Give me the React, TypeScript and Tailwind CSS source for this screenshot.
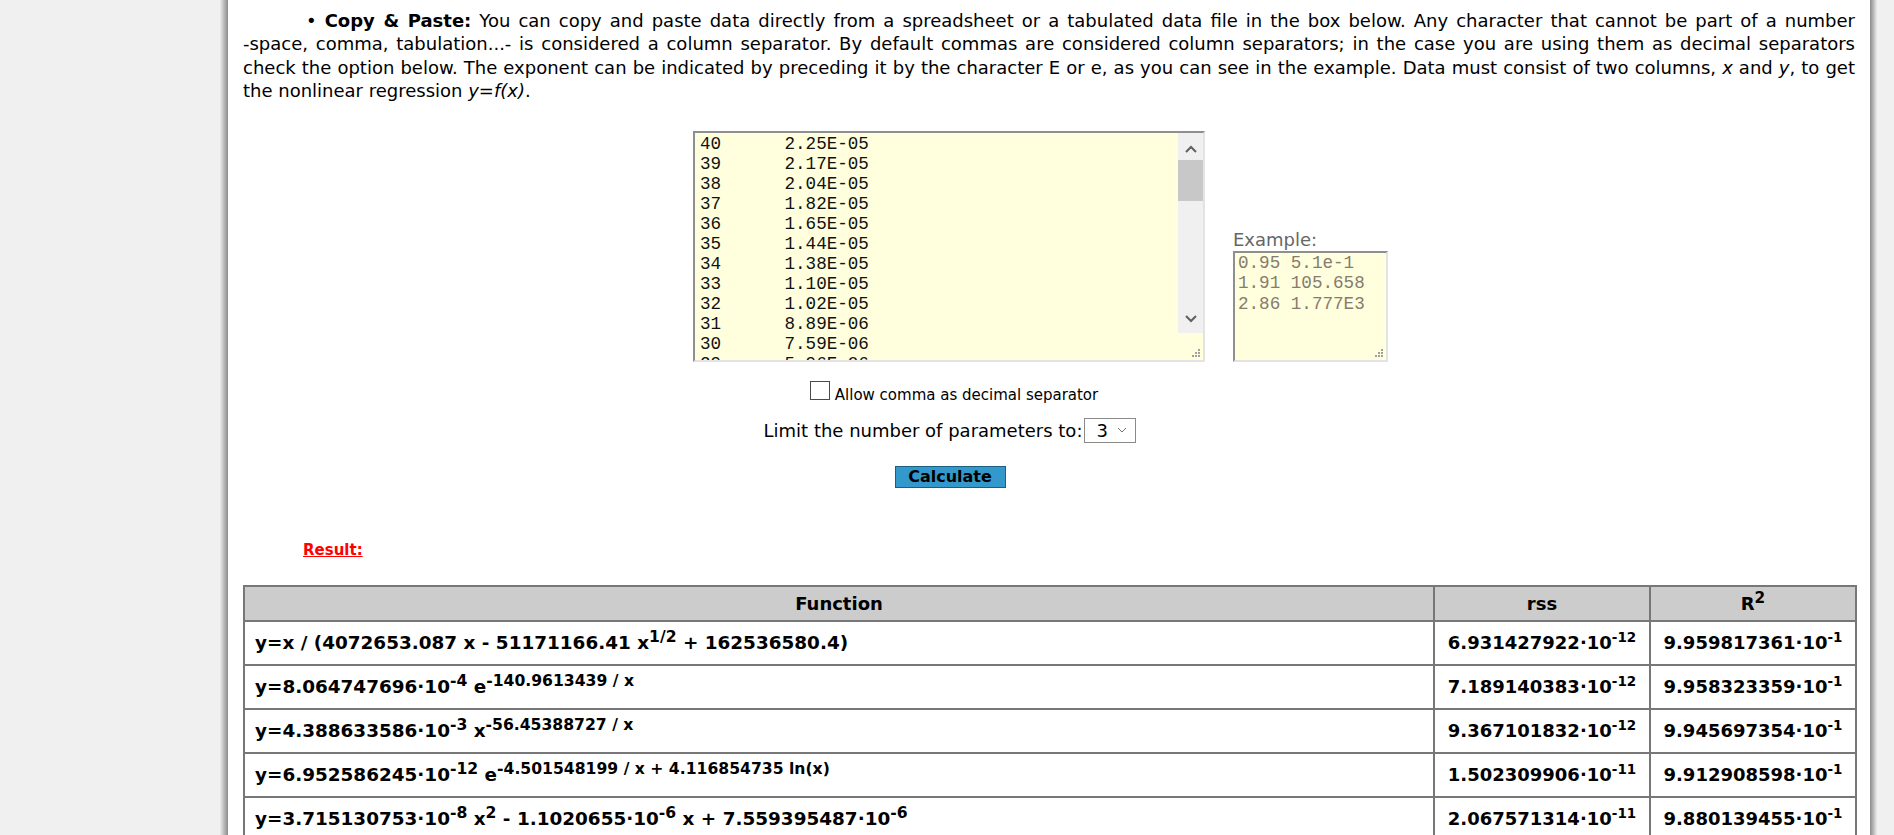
import React from "react";

const dataRows: [string, string][] = [
  ["40", "2.25E-05"],
  ["39", "2.17E-05"],
  ["38", "2.04E-05"],
  ["37", "1.82E-05"],
  ["36", "1.65E-05"],
  ["35", "1.44E-05"],
  ["34", "1.38E-05"],
  ["33", "1.10E-05"],
  ["32", "1.02E-05"],
  ["31", "8.89E-06"],
  ["30", "7.59E-06"],
  ["29", "5.96E-06"],
  ["28", "5.06E-06"],
];

function Dots() {
  return (
    <svg width="9" height="9" viewBox="0 0 9 9" className="block">
      <rect x="7" y="1" width="2" height="2" fill="#a0a0a0" />
      <rect x="4" y="4" width="2" height="2" fill="#a0a0a0" />
      <rect x="7" y="4" width="2" height="2" fill="#a0a0a0" />
      <rect x="1" y="7" width="2" height="2" fill="#a0a0a0" />
      <rect x="4" y="7" width="2" height="2" fill="#a0a0a0" />
      <rect x="7" y="7" width="2" height="2" fill="#a0a0a0" />
    </svg>
  );
}

function Chevron({ up }: { up?: boolean }) {
  return (
    <svg width="12" height="8" viewBox="0 0 12 8" className="block">
      <polyline
        points={up ? "1,7 6,2 11,7" : "1,1 6,6 11,1"}
        fill="none"
        stroke="#606060"
        strokeWidth="2"
      />
    </svg>
  );
}

function DataBox() {
  return (
    <div className="flex h-[231px] w-[512px] shrink-0 overflow-hidden border-2 border-t-[#8f8f8f] border-l-[#8f8f8f] border-r-[#e3e3e3] border-b-[#e3e3e3] bg-[#ffffdd]">
      <div className="flex-1 overflow-hidden pl-[5px] pt-[1px] font-['Liberation_Mono',monospace] text-[17.6px] leading-[20px] text-[#111] whitespace-pre [tab-size:8]">
        {dataRows.map(([a, b]) => (
          <div key={a}>{a + "\t" + b}</div>
        ))}
      </div>
      <div className="flex w-[25px] shrink-0 flex-col">
        <div className="flex h-[200px] flex-col bg-[#f0f0f0]">
          <div className="flex h-[27px] items-center justify-center pt-[5px]">
            <Chevron up />
          </div>
          <div className="h-[41px] bg-[#c8c8c8]" />
          <div className="flex-1" />
          <div className="flex h-[26px] items-center justify-center pb-[1px]">
            <Chevron />
          </div>
        </div>
        <div className="flex flex-1 items-end justify-end pb-[3px] pr-[3px]">
          <Dots />
        </div>
      </div>
    </div>
  );
}

function ExampleBox() {
  return (
    <div className="flex flex-col">
      <div className="text-[18px] leading-[22px] text-[#666]">Example:</div>
      <div className="relative h-[111px] w-[155px] border-2 border-t-[#8f8f8f] border-l-[#8f8f8f] border-r-[#e3e3e3] border-b-[#e3e3e3] bg-[#ffffdd] pl-[3px] font-['Liberation_Mono',monospace] text-[17.6px] leading-[20.5px] text-[#857b6f] whitespace-pre">
        <div>0.95 5.1e-1</div>
        <div>1.91 105.658</div>
        <div>2.86 1.777E3</div>
        <div className="absolute bottom-[3px] right-[3px]">
          <Dots />
        </div>
      </div>
    </div>
  );
}

const dot = "\u00b7";

function Sup({ children }: { children: React.ReactNode }) {
  return <sup className="top-[-0.42em] text-[0.85em]">{children}</sup>;
}

const td = "border-2 border-[#777] text-center";
const tdf = "border-2 border-[#777] px-[10px] text-left text-[18.4px]";

export default function App() {
  return (
    <div className="flex h-[835px] w-full overflow-hidden bg-[#f0f0f0] font-['DejaVu_Sans',sans-serif] text-black">
      <div className="w-[220px] shrink-0 bg-[#f0f0f0]" />
      <div className="w-[8px] shrink-0 bg-linear-to-r from-[#ececec] to-[#8c8c8c]" />
      <main className="w-[1642px] shrink-0 bg-white px-[15px] pt-[9px]">
        <div className="text-[18px] leading-[23.4px]">
          <div className="indent-[63px] text-justify [text-align-last:justify]">
            • <b>Copy &amp; Paste:</b> You can copy and paste data directly from a spreadsheet or
            a tabulated data file in the box below. Any character that cannot be part of a number
          </div>
          <div className="text-justify [text-align-last:justify]">
            -space, comma, tabulation...- is considered a column separator. By default commas are
            considered column separators; in the case you are using them as decimal separators
          </div>
          <div className="text-justify [text-align-last:justify]">
            check the option below. The exponent can be indicated by preceding it by the character
            E or e, as you can see in the example. Data must consist of two columns, <i>x</i> and{" "}
            <i>y</i>, to get
          </div>
          <div>
            the nonlinear regression <i>y=f(x)</i>.
          </div>
        </div>

        <div className="mt-[28px] flex flex-col items-center">
          <div className="flex items-end pr-[17px]">
            <DataBox />
            <div className="ml-[28px]">
              <ExampleBox />
            </div>
          </div>
          <div className="w-[714px] pl-[2px]">
            <div className="flex w-[512px] flex-col items-center">
              <div className="mt-[16px] flex items-start pl-[8px]">
                <div className="mt-[3px] h-[19px] w-[20px] shrink-0 border border-[#4a4a4a] bg-white" />
                <div className="ml-[5px] mt-[6px] text-[15px] leading-[22px]">
                  Allow comma as decimal separator
                </div>
              </div>
              <div className="mt-[12px] flex h-[25px] items-center">
                <span className="text-[18px] leading-[25px]">Limit the number of parameters to:</span>
                <div className="ml-[2px] flex h-[25px] w-[52px] items-center justify-between border border-[#8a8a8a] bg-white pl-[11px] pr-[8px]">
                  <span className="text-[18px] leading-[23px]">3</span>
                  <svg width="10" height="6" viewBox="0 0 10 6" className="block">
                    <polyline points="1,1 5,5 9,1" fill="none" stroke="#707070" strokeWidth="1" />
                  </svg>
                </div>
              </div>
              <button className="mt-[23px] flex h-[22px] w-[111px] items-center justify-center border border-[#1d5f80] bg-[#3399cc] text-[16px] font-bold leading-[20px] text-black">
                Calculate
              </button>
            </div>
          </div>
        </div>

        <div className="mt-[53px] pl-[60px] text-[15px] font-bold leading-[18px]">
          <a className="text-[#ff0000] underline">Result:</a>
        </div>

        <table className="mt-[26px] w-[1612px] table-fixed border-collapse text-[18px] font-bold">
          <colgroup>
            <col className="w-[1190px]" />
            <col className="w-[216px]" />
            <col className="w-[206px]" />
          </colgroup>
          <thead>
            <tr className="h-[35px] bg-[#cccccc]">
              <th className="border-2 border-[#777] py-0 text-center">Function</th>
              <th className="border-2 border-[#777] py-0 text-center">rss</th>
              <th className="border-2 border-[#777] py-0 text-center">
                R<Sup>2</Sup>
              </th>
            </tr>
          </thead>
          <tbody>
            <tr className="h-[44px]">
              <td className={tdf}>
                y=x / (4072653.087 x - 51171166.41 x<Sup>1/2</Sup> + 162536580.4)
              </td>
              <td className={td}>
                6.931427922{dot}10<sup>-12</sup>
              </td>
              <td className={td}>
                9.959817361{dot}10<sup>-1</sup>
              </td>
            </tr>
            <tr className="h-[44px]">
              <td className={tdf}>
                y=8.064747696{dot}10<Sup>-4</Sup> e<Sup>-140.9613439 / x</Sup>
              </td>
              <td className={td}>
                7.189140383{dot}10<sup>-12</sup>
              </td>
              <td className={td}>
                9.958323359{dot}10<sup>-1</sup>
              </td>
            </tr>
            <tr className="h-[44px]">
              <td className={tdf}>
                y=4.388633586{dot}10<Sup>-3</Sup> x<Sup>-56.45388727 / x</Sup>
              </td>
              <td className={td}>
                9.367101832{dot}10<sup>-12</sup>
              </td>
              <td className={td}>
                9.945697354{dot}10<sup>-1</sup>
              </td>
            </tr>
            <tr className="h-[44px]">
              <td className={tdf}>
                y=6.952586245{dot}10<Sup>-12</Sup> e
                <Sup>-4.501548199 / x + 4.116854735 ln(x)</Sup>
              </td>
              <td className={td}>
                1.502309906{dot}10<sup>-11</sup>
              </td>
              <td className={td}>
                9.912908598{dot}10<sup>-1</sup>
              </td>
            </tr>
            <tr className="h-[44px]">
              <td className={tdf}>
                y=3.715130753{dot}10<Sup>-8</Sup> x<Sup>2</Sup> - 1.1020655{dot}10<Sup>-6</Sup> x +
                7.559395487{dot}10<Sup>-6</Sup>
              </td>
              <td className={td}>
                2.067571314{dot}10<sup>-11</sup>
              </td>
              <td className={td}>
                9.880139455{dot}10<sup>-1</sup>
              </td>
            </tr>
            <tr className="h-[44px]">
              <td className={tdf}>
                y=1.093125474{dot}10<Sup>-4</Sup> x<Sup>-3.297584611</Sup> e
                <Sup>0.1164287631 x</Sup>
              </td>
              <td className={td}>
                2.248706921{dot}10<sup>-11</sup>
              </td>
              <td className={td}>
                9.869567290{dot}10<sup>-1</sup>
              </td>
            </tr>
          </tbody>
        </table>
      </main>
      <div className="w-[7px] shrink-0 bg-linear-to-r from-[#8c8c8c] to-[#ececec]" />
      <div className="flex-1 bg-[#f0f0f0]" />
    </div>
  );
}
